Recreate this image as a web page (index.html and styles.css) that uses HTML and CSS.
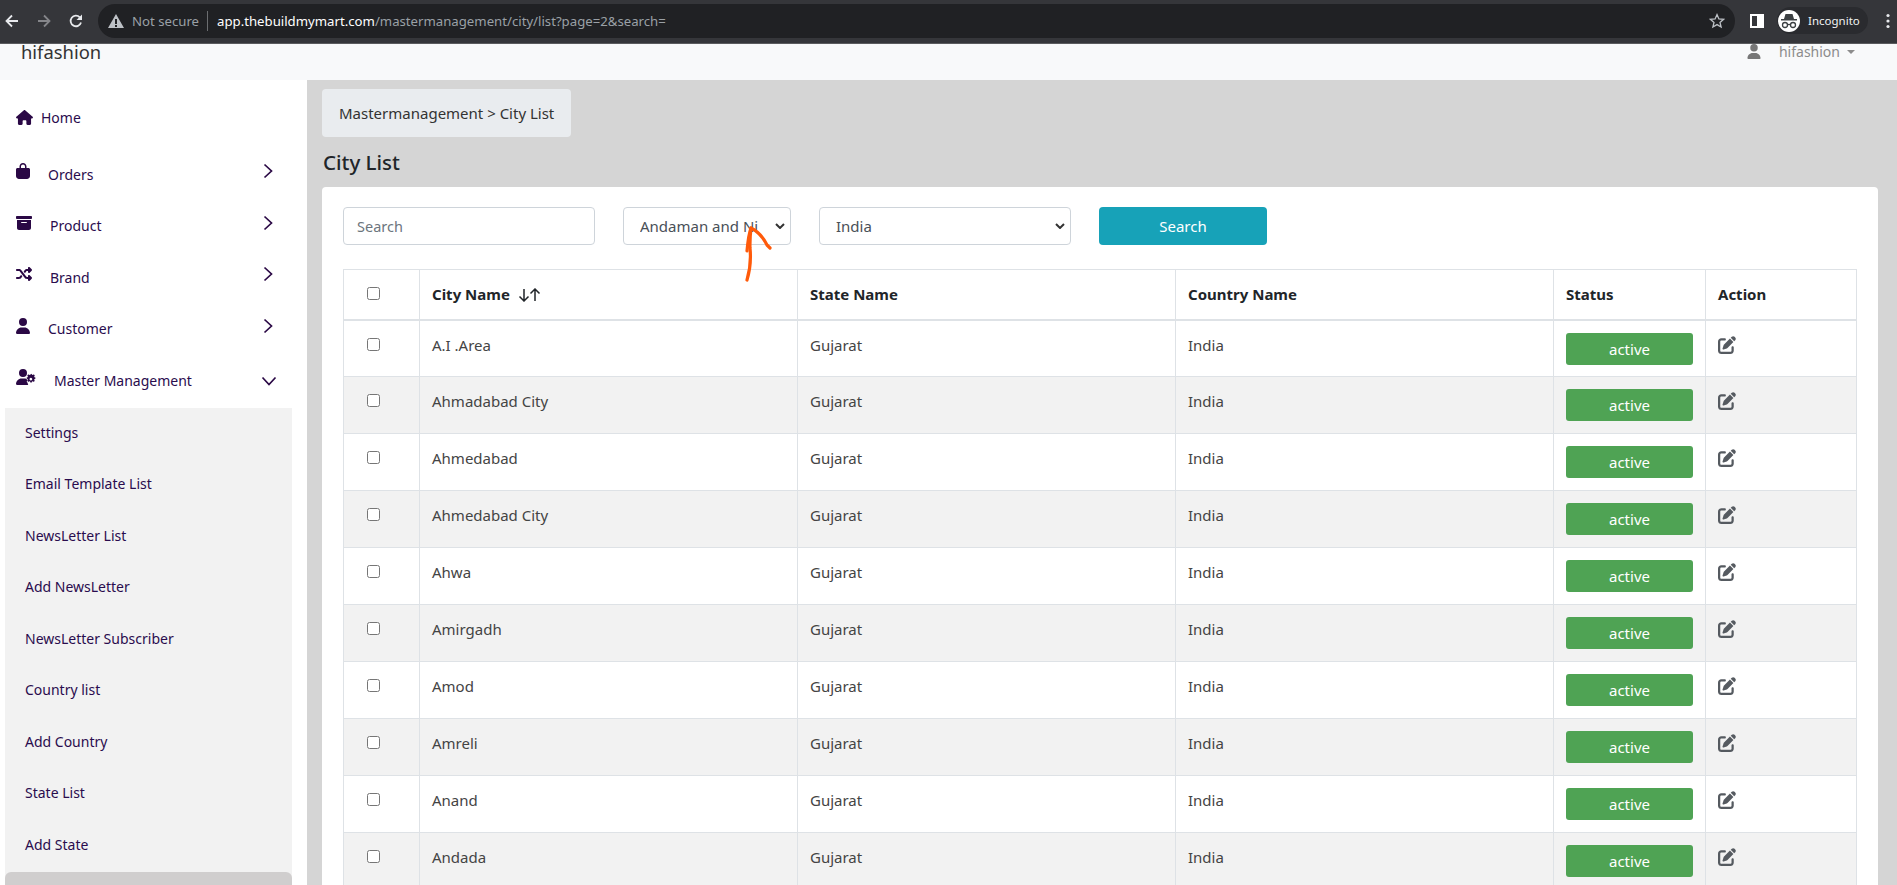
FILE: index.html
```html
<!DOCTYPE html>
<html lang="en">
<head>
  <meta charset="UTF-8">
  <title>City List</title>
  <link rel="stylesheet" href="styles.css">
</head>
<body>

  <!-- ICONS -->
  <svg class="icon-defs" aria-hidden="true">
    <symbol id="i-home" viewBox="0 0 576 512"><path d="M575.8 255.5c0 18-15 32.1-32 32.1h-32l.7 160.2c0 2.7-.2 5.4-.5 8.1V472c0 22.1-17.9 40-40 40H392c-22.1 0-40-17.9-40-40V384c0-17.7-14.3-32-32-32H256c-17.7 0-32 14.3-32 32v88c0 22.1-17.9 40-40 40H104c-22.1 0-40-17.9-40-40V360c0-.9 0-1.9 .1-2.8V287.6H32c-18 0-32-14-32-32.1c0-9 3-17 10-24L266.4 8c7-7 15-8 22-8s15 2 21 7L564.8 231.5c8 7 12 15 11 24z"/></symbol>
    <symbol id="i-bag" viewBox="0 0 448 512"><path d="M160 112c0-35.3 28.7-64 64-64s64 28.7 64 64v48H160V112zm-48 48H48c-26.5 0-48 21.5-48 48V416c0 53 43 96 96 96H352c53 0 96-43 96-96V208c0-26.5-21.5-48-48-48H336V112C336 50.1 285.9 0 224 0S112 50.1 112 112v48z"/></symbol>
    <symbol id="i-box" viewBox="0 0 512 512"><path d="M32 32H480c17.7 0 32 14.3 32 32V96c0 17.7-14.3 32-32 32H32C14.3 128 0 113.7 0 96V64C0 46.3 14.3 32 32 32zm0 128H480V416c0 35.3-28.7 64-64 64H96c-35.3 0-64-28.7-64-64V160zm128 80c0 8.8 7.2 16 16 16H336c8.8 0 16-7.2 16-16s-7.2-16-16-16H176c-8.8 0-16 7.2-16 16z"/></symbol>
    <symbol id="i-shuffle" viewBox="0 0 512 512"><path d="M403.8 34.4c12-5 25.7-2.2 34.9 6.9l64 64c6 6 9.4 14.1 9.4 22.6s-3.4 16.6-9.4 22.6l-64 64c-9.2 9.2-22.9 11.9-34.9 6.9s-19.8-16.6-19.8-29.6V160H352c-10.1 0-19.6 4.7-25.6 12.8L284 229.3 244 176l31.2-41.6C293.3 110.2 321.8 96 352 96h32V64c0-12.9 7.8-24.6 19.8-29.6zM164 282.7L204 336l-31.2 41.6C154.7 401.8 126.2 416 96 416H32c-17.7 0-32-14.3-32-32s14.3-32 32-32H96c10.1 0 19.6-4.7 25.6-12.8L164 282.7zm274.6 188c-9.2 9.2-22.9 11.9-34.9 6.9s-19.8-16.6-19.8-29.6V416H352c-30.2 0-58.7-14.2-76.8-38.4L121.6 172.8c-6-8.1-15.5-12.8-25.6-12.8H32c-17.7 0-32-14.3-32-32s14.3-32 32-32H96c30.2 0 58.7 14.2 76.8 38.4L326.4 339.2c6 8.1 15.5 12.8 25.6 12.8h32V320c0-12.9 7.8-24.6 19.8-29.6s25.7-2.2 34.9 6.9l64 64c6 6 9.4 14.1 9.4 22.6s-3.4 16.6-9.4 22.6l-64 64z"/></symbol>
    <symbol id="i-user" viewBox="0 0 448 512"><path d="M224 256A128 128 0 1 0 224 0a128 128 0 1 0 0 256zm-45.7 48C79.8 304 0 383.8 0 482.3C0 498.7 13.3 512 29.7 512H418.3c16.4 0 29.7-13.3 29.7-29.7C448 383.8 368.2 304 269.7 304H178.3z"/></symbol>
    <symbol id="i-user-gear" viewBox="0 0 640 512"><path d="M224 256A128 128 0 1 0 224 0a128 128 0 1 0 0 256zm-45.7 48C79.8 304 0 383.8 0 482.3C0 498.7 13.3 512 29.7 512H392c-12-22-22-44-16-70l-20-12c-12-8-16-24-9-36l22-38c-20-32-50-52-100-52H178.3z"/><path fill-rule="evenodd" d="M498 190l14 34 34 6 22-20 34 34-20 24 8 32 30 8v46l-30 8-8 32 20 24-34 34-24-20-32 8-8 30h-46l-8-30-32-8-24 20-34-34 20-24-8-32-30-8v-46l30-8 8-32-20-24 34-34 24 20 32-8zm-22 130a44 44 0 1 0 .1 0z" transform="translate(0 -40)"/></symbol>
    <symbol id="i-edit" viewBox="0 0 512 512"><path d="M471.6 21.7c-21.9-21.9-57.3-21.9-79.2 0L362.3 51.7l97.9 97.9 30.1-30.1c21.9-21.9 21.9-57.3 0-79.2L471.6 21.7zm-299.2 220c-6.1 6.1-10.8 13.6-13.5 21.9l-29.6 88.8c-2.9 8.6-.6 18.1 5.8 24.6s15.9 8.7 24.6 5.8l88.8-29.6c8.2-2.7 15.7-7.4 21.9-13.5L437.7 172.3 339.7 74.3 172.4 241.7zM96 64C43 64 0 107 0 160V416c0 53 43 96 96 96H352c53 0 96-43 96-96V320c0-17.7-14.3-32-32-32s-32 14.3-32 32v96c0 17.7-14.3 32-32 32H96c-17.7 0-32-14.3-32-32V160c0-17.7 14.3-32 32-32h96c17.7 0 32-14.3 32-32s-14.3-32-32-32H96z"/></symbol>
    <symbol id="i-right" viewBox="0 0 10 16"><path d="M1.500 1.500 8.500 8l-7 6.500" fill="none" stroke="currentColor" stroke-width="1.700"/></symbol>
    <symbol id="i-down" viewBox="0 0 16 10"><path d="M1.500 1.500 8 8.500l6.500-7" fill="none" stroke="currentColor" stroke-width="1.700"/></symbol>
  </svg>

  <!-- BROWSER BAR -->
  <div class="browser-bar">
    <svg class="bar-icon nav-back" viewBox="0 0 16 16"><path d="M14 8H3M8 2.500 2.500 8 8 13.500" fill="none" stroke="currentColor" stroke-width="1.800"/></svg>
    <svg class="bar-icon nav-forward" viewBox="0 0 16 16"><path d="M2 8h11M8 2.500 13.500 8 8 13.500" fill="none" stroke="currentColor" stroke-width="1.800"/></svg>
    <svg class="bar-icon nav-reload" viewBox="0 0 16 16"><path d="M13 9.500A5.300 5.300 0 1 1 11.800 4.300" fill="none" stroke="currentColor" stroke-width="1.800"/><path d="M14 1.500V7H8.500z" fill="currentColor"/></svg>
    <div class="omnibox">
      <svg class="warn-icon" viewBox="0 0 16 14"><path fill-rule="evenodd" d="M8 0l8 14H0zM7 5v5h2V5zm0 6v2h2v-2z"/></svg>
      <span class="not-secure">Not secure</span>
      <span class="omni-divider"></span>
      <span class="url"><b>app.thebuildmymart.com</b>/mastermanagement/city/list?page=2&amp;search=</span>
      <svg class="star-icon" viewBox="0 0 16 16"><path d="M8 1.600l1.900 4.300 4.700.4-3.600 3.100 1.100 4.600L8 11.600 3.900 14l1.100-4.600L1.400 6.300l4.700-.4z" fill="none" stroke="currentColor" stroke-width="1.300"/></svg>
    </div>
    <svg class="panel-icon" viewBox="0 0 14 14"><path fill-rule="evenodd" d="M0 0h14v14H0zM2 2v10h5V2z"/></svg>
    <div class="incognito">
      <span class="incognito-badge">
        <svg viewBox="0 0 22 22"><path d="M7.500 4h7l1.500 5h3v1.500H3V9h3z" fill="#3c4043"/><circle cx="7" cy="15" r="2.500" fill="none" stroke="#3c4043" stroke-width="1.300"/><circle cx="15" cy="15" r="2.500" fill="none" stroke="#3c4043" stroke-width="1.300"/><path d="M9.500 14.500h3" stroke="#3c4043" stroke-width="1.300"/></svg>
      </span>
      <span>Incognito</span>
    </div>
    <svg class="menu-icon" viewBox="0 0 4 16"><circle cx="2" cy="2.500" r="1.600"/><circle cx="2" cy="8" r="1.600"/><circle cx="2" cy="13.500" r="1.600"/></svg>
  </div>

  <!-- NAVBAR -->
  <header class="navbar">
    <div class="brand-name">hifashion</div>
    <div class="user-menu">
      <svg class="user-icon"><use href="#i-user"/></svg>
      <span class="user-name">hifashion</span>
      <span class="caret"></span>
    </div>
  </header>

  <div class="layout">
    <!-- SIDEBAR -->
    <aside class="sidebar">
      <ul class="side-menu">
        <li class="side-item side-home"><svg class="side-icon home"><use href="#i-home"/></svg><span>Home</span></li>
        <li class="side-item"><svg class="side-icon bag"><use href="#i-bag"/></svg><span class="label">Orders</span><svg class="side-arrow"><use href="#i-right"/></svg></li>
        <li class="side-item"><svg class="side-icon box"><use href="#i-box"/></svg><span class="label">Product</span><svg class="side-arrow"><use href="#i-right"/></svg></li>
        <li class="side-item"><svg class="side-icon shuffle"><use href="#i-shuffle"/></svg><span class="label">Brand</span><svg class="side-arrow"><use href="#i-right"/></svg></li>
        <li class="side-item"><svg class="side-icon person"><use href="#i-user"/></svg><span class="label">Customer</span><svg class="side-arrow"><use href="#i-right"/></svg></li>
        <li class="side-item"><svg class="side-icon gear"><use href="#i-user-gear"/></svg><span class="label">Master Management</span><svg class="side-arrow-down"><use href="#i-down"/></svg></li>
      </ul>
      <ul class="sub-menu">
        <li>Settings</li>
        <li>Email Template List</li>
        <li>NewsLetter List</li>
        <li>Add NewsLetter</li>
        <li>NewsLetter Subscriber</li>
        <li>Country list</li>
        <li>Add Country</li>
        <li>State List</li>
        <li>Add State</li>
        <li class="sub-active"></li>
      </ul>
    </aside>

    <!-- MAIN CONTENT -->
    <main class="content">
      <div class="breadcrumb">Mastermanagement &gt; City List</div>
      <h1 class="page-title">City List</h1>

      <section class="card">
        <form class="filters">
          <input class="field field-search" type="text" placeholder="Search">
          <select class="field field-state"><option>Andaman and Nicobar</option></select>
          <select class="field field-country"><option>India</option></select>
          <button class="btn-search" type="button">Search</button>
        </form>

        <table class="city-table">
          <colgroup>
            <col class="col-check"><col class="col-name"><col class="col-name"><col class="col-name"><col class="col-status"><col>
          </colgroup>
          <thead>
            <tr>
              <th class="check-cell"><input type="checkbox"></th>
              <th>City Name <svg class="sort-arrows" viewBox="0 0 24 14"><path d="M6 1v12M1.500 8.500 6 13l4.500-4.500M17 13V1M12.500 5.500 17 1l4.500 4.500" fill="none" stroke="currentColor" stroke-width="1.500"/></svg></th>
              <th>State Name</th>
              <th>Country Name</th>
              <th>Status</th>
              <th>Action</th>
            </tr>
          </thead>
          <tbody>
            <tr><td class="check-cell"><input type="checkbox"></td><td>A.I .Area</td><td>Gujarat</td><td>India</td><td><span class="badge">active</span></td><td><svg class="edit-icon"><use href="#i-edit"/></svg></td></tr>
            <tr><td class="check-cell"><input type="checkbox"></td><td>Ahmadabad City</td><td>Gujarat</td><td>India</td><td><span class="badge">active</span></td><td><svg class="edit-icon"><use href="#i-edit"/></svg></td></tr>
            <tr><td class="check-cell"><input type="checkbox"></td><td>Ahmedabad</td><td>Gujarat</td><td>India</td><td><span class="badge">active</span></td><td><svg class="edit-icon"><use href="#i-edit"/></svg></td></tr>
            <tr><td class="check-cell"><input type="checkbox"></td><td>Ahmedabad City</td><td>Gujarat</td><td>India</td><td><span class="badge">active</span></td><td><svg class="edit-icon"><use href="#i-edit"/></svg></td></tr>
            <tr><td class="check-cell"><input type="checkbox"></td><td>Ahwa</td><td>Gujarat</td><td>India</td><td><span class="badge">active</span></td><td><svg class="edit-icon"><use href="#i-edit"/></svg></td></tr>
            <tr><td class="check-cell"><input type="checkbox"></td><td>Amirgadh</td><td>Gujarat</td><td>India</td><td><span class="badge">active</span></td><td><svg class="edit-icon"><use href="#i-edit"/></svg></td></tr>
            <tr><td class="check-cell"><input type="checkbox"></td><td>Amod</td><td>Gujarat</td><td>India</td><td><span class="badge">active</span></td><td><svg class="edit-icon"><use href="#i-edit"/></svg></td></tr>
            <tr><td class="check-cell"><input type="checkbox"></td><td>Amreli</td><td>Gujarat</td><td>India</td><td><span class="badge">active</span></td><td><svg class="edit-icon"><use href="#i-edit"/></svg></td></tr>
            <tr><td class="check-cell"><input type="checkbox"></td><td>Anand</td><td>Gujarat</td><td>India</td><td><span class="badge">active</span></td><td><svg class="edit-icon"><use href="#i-edit"/></svg></td></tr>
            <tr><td class="check-cell"><input type="checkbox"></td><td>Andada</td><td>Gujarat</td><td>India</td><td><span class="badge">active</span></td><td><svg class="edit-icon"><use href="#i-edit"/></svg></td></tr>
          </tbody>
        </table>
      </section>
    </main>
  </div>

  <!-- hand-drawn arrow over the state select -->
  <svg class="scribble" viewBox="0 0 36 60">
    <path d="M4 56C7 46 8 34 7 24C6.800 16 7.500 8 8 4"/>
    <path d="M4 27C5 16 6 9 8 4C14 7 20 13 24 21C25 22 26 23 27 24"/>
  </svg>

</body>
</html>
```

FILE: styles.css
```css
/* ---------- RESET / BASE ---------- */
* {
  margin: 0;
  padding: 0;
  box-sizing: border-box;
}
html, body {
  height: 100%;
  overflow: hidden;
}
body {
  position: relative;
  background: #fff;
  color: #212529;
  font-family: 'Noto Sans', 'Open Sans', sans-serif;
  font-size: 14px;
}
ul {
  list-style: none;
}
.icon-defs {
  display: none;
}

/* ---------- BROWSER BAR ---------- */
.browser-bar {
  height: 44px;
  display: flex;
  align-items: center;
  background: #35363a;
  border-bottom: 1px solid #5a5b5e;
  color: #e8eaed;
  padding: 0 0 2px 0;
}
.bar-icon {
  width: 16px;
  height: 16px;
  flex: none;
}
.nav-back {
  margin-left: 4px;
}
.nav-forward {
  margin-left: 16px;
  color: #85868a;
}
.nav-reload {
  margin-left: 16px;
}
.omnibox {
  flex: none;
  width: 1637px;
  height: 34px;
  margin-left: 14px;
  display: flex;
  align-items: center;
  background: #202124;
  border-radius: 17px;
  padding-left: 10px;
  font-size: 13.2px;
  white-space: nowrap;
}
.warn-icon {
  width: 16px;
  height: 14px;
  fill: #bdc1c6;
}
.not-secure {
  margin-left: 8px;
  color: #9aa0a6;
}
.omni-divider {
  width: 1px;
  height: 20px;
  margin: 0 9px 0 8px;
  background: #6b6d70;
}
.url {
  color: #9aa0a6;
}
.url b {
  color: #fff;
  font-weight: 400;
}
.star-icon {
  width: 16px;
  height: 16px;
  margin-left: auto;
  margin-right: 10px;
  color: #bdc1c6;
}
.panel-icon {
  width: 14px;
  height: 14px;
  margin-left: 15px;
  fill: #fff;
  flex: none;
}
.incognito {
  flex: none;
  width: 91px;
  height: 27px;
  margin-left: 13px;
  display: flex;
  align-items: center;
  gap: 8px;
  background: #2a2b2f;
  border-radius: 14px;
  font-size: 11.5px;
  color: #f1f3f4;
}
.incognito-badge {
  width: 22px;
  height: 22px;
  border-radius: 50%;
  background: #fff;
  margin-left: 1px;
  display: flex;
}
.menu-icon {
  width: 4px;
  height: 16px;
  margin-left: 18px;
  fill: #e8eaed;
  flex: none;
}

/* ---------- NAVBAR ---------- */
.navbar {
  height: 36px;
  display: flex;
  justify-content: space-between;
  background: #f8f9fa;
}
.brand-name {
  margin-left: 21px;
  font-size: 18.4px;
  line-height: 16px;
  color: #333;
}
.user-menu {
  display: flex;
  align-items: flex-start;
  color: #8c8c8c;
  margin-right: 42px;
}
.user-name {
  line-height: 16px;
}
.user-icon {
  width: 16px;
  height: 15px;
  margin-right: 17px;
  fill: #777;
}
.caret {
  width: 0;
  height: 0;
  margin: 6px 0 0 7px;
  border-left: 4px solid transparent;
  border-right: 4px solid transparent;
  border-top: 4px solid #8c8c8c;
}

/* ---------- LAYOUT ---------- */
.layout {
  display: flex;
  height: calc(100vh - 80px);
}

/* ---------- SIDEBAR ---------- */
.sidebar {
  flex: none;
  width: 307px;
  background: #fff;
  color: #2a0c4e;
  padding-top: 12px;
}
.side-item {
  height: 51.5px;
  display: flex;
  align-items: center;
  padding: 0 16px 3px;
  position: relative;
}
.side-item.side-home {
  height: 58px;
  padding-bottom: 7px;
}
.side-icon {
  flex: none;
  fill: #2a0845;
  margin-top: -6px;
}
.side-home .side-icon {
  margin-top: 0;
}
.home {
  width: 17px;
  height: 15px;
  margin-right: 8px;
}
.bag {
  width: 14px;
  height: 16px;
}
.box {
  width: 16px;
  height: 16px;
}
.shuffle {
  width: 16px;
  height: 16px;
}
.person {
  width: 14px;
  height: 16px;
}
.gear {
  width: 20px;
  height: 16px;
}
.label {
  margin-left: 18px;
}
.side-arrow {
  width: 10px;
  height: 16px;
  position: absolute;
  left: 263px;
  top: 13px;
  color: #2a0845;
}
.side-arrow-down {
  width: 16px;
  height: 10px;
  position: absolute;
  left: 261px;
  top: 20px;
  color: #2a0845;
}
.sub-menu {
  width: 287px;
  margin: 0.5px 0 0 5px;
  background: #f2f2f2;
}
.sub-menu li {
  height: 51.5px;
  padding: 14.6px 0 0 20px;
}
.sub-menu .sub-active {
  background: #d0cece;
  border-radius: 6px;
}

/* ---------- MAIN CONTENT ---------- */
.content {
  flex: 1;
  background: #d5d5d5;
  padding: 9px 19px 0 15px;
  min-width: 0;
  font-size: 15px;
}
.breadcrumb {
  width: 249px;
  height: 48px;
  line-height: 48px;
  padding-left: 17px;
  background: #e9ecef;
  border-radius: 4px;
  color: #333;
  white-space: nowrap;
}
.page-title {
  margin-top: 11px;
  height: 39px;
  padding-left: 1px;
  font-size: 20.5px;
  line-height: 28px;
  font-weight: 500;
}
.card {
  background: #fff;
  border-radius: 4px;
  padding: 20px 20px 0 21px;
}

/* Filtres */
.filters {
  display: flex;
  height: 38px;
  margin-bottom: 24px;
}
.field {
  height: 38px;
  border: 1px solid #ced4da;
  border-radius: 4px;
  background: #fff;
  font-family: inherit;
  font-size: 15px;
  color: #495057;
  outline: none;
}
.field::placeholder {
  color: #6c757d;
}
select.field {
  appearance: none;
  padding: 0 32px 0 16px;
  text-overflow: clip;
  background-image: url("data:image/svg+xml,%3Csvg xmlns='http://www.w3.org/2000/svg' viewBox='0 0 10 6'%3E%3Cpath d='M1 1l4 4 4-4' fill='none' stroke='%23333' stroke-width='2'/%3E%3C/svg%3E");
  background-repeat: no-repeat;
  background-position: right 5px center;
  background-size: 10px 6px;
}
.field-search {
  width: 252px;
  padding: 0 13px;
  font-size: 14.5px;
}
.field-state {
  width: 168px;
  margin-left: 28px;
}
.field-country {
  width: 252px;
  margin-left: 28px;
}
.btn-search {
  width: 168px;
  height: 38px;
  margin-left: 28px;
  border: none;
  border-radius: 4px;
  background: #17a2b8;
  color: #fff;
  font-family: inherit;
  font-size: 15px;
}

/* Table */
.city-table {
  width: 1514px;
  table-layout: fixed;
  border-collapse: collapse;
  border: 1px solid #dee2e6;
}
.col-check {
  width: 76px;
}
.col-name {
  width: 378px;
}
.col-status {
  width: 152px;
}
.city-table th,
.city-table td {
  border: 1px solid #dee2e6;
  text-align: left;
  vertical-align: top;
  padding: 14px 12px 0;
}
.city-table th {
  height: 50px;
  border-bottom-width: 2px;
  font-weight: 700;
}
.city-table td {
  height: 57px;
  color: #444;
}
.city-table tbody tr:nth-child(even) {
  background: #f2f2f2;
}
.city-table .check-cell {
  padding: 9px 0 0 23px;
}
.city-table tbody .check-cell {
  padding-top: 11px;
}
.city-table input[type="checkbox"] {
  display: block;
  width: 13px;
  height: 13px;
  margin: 8px 0 0;
}
.city-table tbody input[type="checkbox"] {
  margin-top: 6px;
}
.sort-arrows {
  width: 24px;
  height: 14px;
  margin-left: 4px;
  vertical-align: -2px;
}
.city-table td:nth-child(5) {
  padding-top: 12px;
}
.city-table td:nth-child(6) {
  padding-top: 15px;
}
.badge {
  display: block;
  width: 127px;
  height: 32px;
  line-height: 32px;
  text-align: center;
  background: #4fa354;
  border-radius: 3px;
  color: #fff;
}
.edit-icon {
  display: block;
  width: 18px;
  height: 18px;
  fill: #555a60;
}

/* Fleche dessinee sur la capture */
.scribble {
  position: absolute;
  left: 743px;
  top: 224px;
  width: 36px;
  height: 60px;
  fill: none;
  stroke: #ff5a0a;
  stroke-width: 3.2;
  stroke-linecap: round;
  stroke-linejoin: round;
}
```
